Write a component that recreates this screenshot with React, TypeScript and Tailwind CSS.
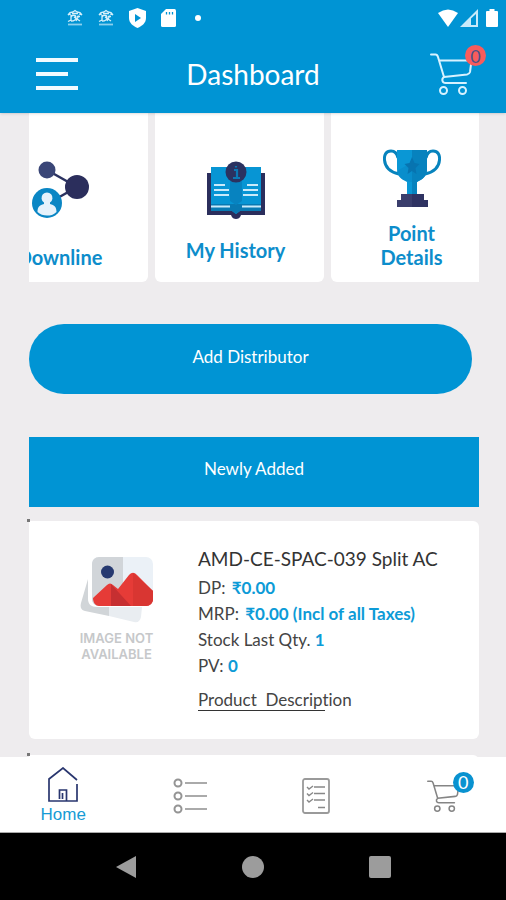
import type { ReactNode } from 'react';

function AlertIcon() {
  return (
    <svg width="16" height="18" viewBox="0 0 16 18" fill="none" stroke="#d5effa" strokeWidth="1.3">
      <path d="M1 6 3 3.500l3-.5 2-1.500L10 3l3 .5L15 6M1 6l3-1M15 6l-3-1M5 4.500h6" />
      <path d="M4 6v6M4 8.500c0-3 5-3 5 0 0 2-2 3.500-5 3.500M7 8l6 4M12 6.500l-3 5.500M10 7.500h3M1 12.500l3-1.500" />
      <path d="M1 15.500h14" strokeWidth="1.800" opacity=".65" />
    </svg>
  );
}

function CartIcon({ className }: { className: string }) {
  return (
    <svg className={className} viewBox="0 0 42 42" fill="none" stroke="currentColor" strokeLinecap="round" strokeLinejoin="round">
      <path d="M1 1.500h4.500c1.500 0 2 .8 2.500 2.500L14 24l23-2.500c2-.3 2.500-1 3-2.500l1.500-11.500H9" />
      <path d="M14 24c-1.500 1-2 2.500-1.500 4 .5 1.500 1.500 2 3 2h20.500" />
      <circle cx="13.500" cy="37.500" r="3.500" />
      <circle cx="32.500" cy="37.500" r="3.500" />
    </svg>
  );
}

function DownlineIcon() {
  return (
    <svg width="58" height="58" viewBox="0 0 58 58">
      <path d="m16 9 30 17-30 17" fill="none" stroke="#2b3260" strokeWidth="2.500" />
      <circle cx="16" cy="9" r="8.500" fill="#3a4677" />
      <circle cx="46" cy="26" r="12" fill="#2b2e5c" />
      <circle cx="16" cy="42" r="15" fill="#0a86c4" />
      <path d="M6.500 51c0-5 2-7 6.500-8v-1.500a5.500 5.500 0 1 1 6 0V43c4.500 1 6.500 3 6.500 8-3 3-6 3.500-9.500 3.500S9 53.500 6.500 51Z" fill="#e6f2fb" />
    </svg>
  );
}

function HistoryIcon() {
  return (
    <svg width="58" height="58" viewBox="0 0 58 58">
      <path d="M0 12h58v42H34c-1 3-3 4-5 4s-4-1-5-4H0Z" fill="#2b2e5c" />
      <path d="M4 6h50v44H33l-4 3-4-3H4Z" fill="#0795d4" />
      <path d="M4 43h50v7H33l-4 3-4-3H4Z" fill="#0879b2" />
      <path d="M23 20h12v20l-6 4-6-4Z" fill="#0783c0" />
      <path d="M7 24h11M7 29h15M7 34h15M4 45.500h19M40 24h11M36 29h15M36 34h15M35 45.500h19" stroke="#c9eafa" strokeWidth="2" />
      <circle cx="29" cy="11" r="10.500" fill="#2b3260" />
      <path d="M27 9h3v8M26 17h7M29 5v1.500" fill="none" stroke="#0b79b5" strokeWidth="2.200" />
    </svg>
  );
}

function TrophyIcon() {
  return (
    <svg width="58" height="58" viewBox="0 0 58 58">
      <path d="M15 9C14 4 12 2 8 2 3 2 1 6 1.500 11 2 18 7 23 16 25M43 9c1-5 3-7 7-7 5 0 7 4 6.500 9C56 18 51 23 42 25" fill="none" stroke="#0783bd" strokeWidth="3" />
      <path d="M14 1h30v19c0 7-4 10-10 13v13H24V33c-6-3-10-6-10-13Z" fill="#0a97d5" />
      <path d="M29 1h15v19c0 7-4 10-10 13v13h-5Z" fill="#0782be" />
      <path d="m14 22 12-7 3-3v21c-9-1-14-4-15-11Z" fill="#0782be" opacity=".4" />
      <path d="m29 8 2.500 6 5 1-4 4 1 6-4.500-3-4.500 3 1-6-4-4 5-1Z" fill="#0774b0" />
      <path d="M18 45h23v6h4v7H14v-7h4Z" fill="#3a3e6c" />
      <path d="M29 45h12v6h4v7H29Z" fill="#2f3362" />
    </svg>
  );
}

function MissingImage() {
  return (
    <svg width="74" height="68" viewBox="0 0 74 68">
      <path d="M8 23 1 47c-1 4 0 7 4 8l24 5V51H17c-6 0-9-3-9-8Z" fill="#d1d5d8" />
      <path d="M29 51v9l25 6c4 1 6-1 7-5l1-10Z" fill="#e9edf1" />
      <rect x="12" y="1" width="61" height="49" rx="7" fill="#ebf1f7" />
      <path d="M19 1h24v49H19c-4 0-7-3-7-7V8c0-4 3-7 7-7Z" fill="#d1d5d9" />
      <circle cx="27.500" cy="16" r="6.500" fill="#263970" />
      <path d="m13 42 14-13c2-2 4-2 6 0l5 4 11-14c3-3 5-3 8 0l16 16v8c0 4-3 7-7 7H19c-3 0-6-3-6-8Z" fill="#e63b37" />
      <path d="m31 28 20 22H31Z" fill="#c62f31" />
      <path d="m53 17 20 18v8c0 4-3 7-7 7H53Z" fill="#d93632" />
    </svg>
  );
}

function Tile({ icon, children }: { icon: ReactNode; children: ReactNode }) {
  return (
    <a href="#" className="flex h-[169px] w-[169px] shrink-0 flex-col items-center rounded-b-md bg-white pr-2 text-center text-[20px] leading-6 font-bold text-[#0d8dcb]">
      {icon}
      {children}
    </a>
  );
}

function Marker() {
  return <span className="absolute -top-0.5 -left-0.5 size-[3px] bg-[#777]" />;
}

export default function App() {
  return (
    <div className="flex h-screen flex-col overflow-hidden bg-[#eeecee] font-['Lato','Noto_Sans',sans-serif] [font-variant-ligatures:none]">
      <header className="z-10 shrink-0 bg-[#0094d4] text-white shadow-sm">
        <div className="flex h-[35px] items-center justify-between pr-2 pl-[67px]">
          <div className="flex items-center gap-[15px]">
            <AlertIcon />
            <AlertIcon />
            <svg width="17" height="20" viewBox="0 0 17 20">
              <path d="M8.500 0 17 3v7c0 5-4 8-8.500 10C4 18 0 15 0 10V3Z" fill="#fff" />
              <path d="m6 6 6 4-6 4Z" fill="#0094d4" />
            </svg>
            <svg width="15" height="18" viewBox="0 0 15 18">
              <path d="M5 0h8.500Q15 0 15 2v14.500q0 1.500-1.500 1.500h-12Q0 18 0 16.500V5Z" fill="#fff" />
              <path d="M5.500 3v2.500M8.500 3v2.500M11.500 3v2.500" stroke="#0094d4" strokeWidth="1.300" />
            </svg>
            <span className="ml-1 size-1.5 rounded-full bg-white" />
          </div>
          <div className="flex items-center">
            <svg width="20" height="18" viewBox="0 0 20 18"><path d="M0 4Q10-3 20 4L10 18Z" fill="#fff" /></svg>
            <svg className="ml-0.5" width="18" height="18" viewBox="0 0 18 18">
              <path d="M18 0v18H0Z" fill="#c8eafa" />
              <path d="M11 9.500 16 5v11h-5Z" fill="#0094d4" />
            </svg>
            <svg className="ml-2" width="12" height="18" viewBox="0 0 12 18">
              <path d="M3.500 0h5v2H11q1 0 1 1v14q0 1-1 1H1q-1 0-1-1V3q0-1 1-1h2.500Z" fill="#fff" />
            </svg>
          </div>
        </div>
        <div className="grid h-[78px] grid-cols-[80px_1fr_80px] items-center">
          <button aria-label="Menu" className="flex flex-col gap-2.5 pl-9">
            <span className="h-1 w-[42px] bg-[#f1faff]" />
            <span className="h-1 w-8 bg-[#f1faff]" />
            <span className="h-1 w-[42px] bg-[#f1faff]" />
          </button>
          <h1 className="text-center text-[28px] leading-8">Dashboard</h1>
          <button aria-label="Cart" className="relative h-[42px]">
            <CartIcon className="ml-1 size-[42px] stroke-2 text-[#d7f2ff]" />
            <span className="absolute -top-2 right-5 flex size-[21px] items-center justify-center rounded-full bg-[#f85c5c] text-[18px] leading-5 text-[#4b5287]">0</span>
          </button>
        </div>
      </header>

      <main className="min-h-0 flex-1 overflow-hidden pr-[27px] pl-[29px]">
        <nav className="overflow-hidden">
          <div className="-ml-[50px] flex gap-[7px]">
            <Tile icon={<div className="mt-12 mb-[26px]"><DownlineIcon /></div>}>Downline</Tile>
            <Tile icon={<div className="mt-12 mb-[19px]"><HistoryIcon /></div>}>My History</Tile>
            <Tile icon={<div className="mt-9 mb-3.5"><TrophyIcon /></div>}>
              <span>Point<br />Details</span>
            </Tile>
          </div>
        </nav>

        <div className="pt-[42px] pr-[7px]">
          <button className="h-[70px] w-full rounded-full bg-[#0094d4] pb-1 text-[17px] text-white">Add Distributor</button>
        </div>

        <h2 className="mt-[43px] flex h-[70px] items-center justify-center bg-[#0094d4] pb-1.5 text-[17px] text-white">Newly Added</h2>

        <article className="relative mt-3.5 flex h-[218px] rounded-md rounded-tl-none bg-white text-[17px] leading-[26px] text-[#444]">
          <Marker />
          <div className="flex w-[169px] shrink-0 flex-col items-center pt-[35px] pl-1.5">
            <MissingImage />
            <p className="mt-1.5 text-center font-['Inter',sans-serif] text-[13px] leading-4 font-semibold text-[#c6c8ca]">
              IMAGE NOT<br />AVAILABLE
            </p>
          </div>
          <div className="min-w-0 pt-6">
            <h3 className="mb-0.5 text-[19px] leading-7 whitespace-nowrap text-[#333]">AMD-CE-SPAC-039 Split AC</h3>
            <p>DP: <b className="ml-0.5 text-[#0d9bd7]">₹0.00</b></p>
            <p>MRP: <b className="ml-0.5 text-[#0d9bd7]">₹0.00 (Incl of all Taxes)</b></p>
            <p>Stock Last Qty. <b className="text-[#0d9bd7]">1</b></p>
            <p>PV: <b className="text-[#0d9bd7]">0</b></p>
            <a href="#" className="relative mt-2 block whitespace-pre">
              Product  Description
              <span className="absolute bottom-0.5 left-0 h-px w-[127px] bg-[#333]" />
            </a>
          </div>
        </article>

        <article className="relative mt-4 h-[218px] rounded-md rounded-tl-none bg-white">
          <Marker />
        </article>
      </main>

      <nav className="grid h-[76px] shrink-0 grid-cols-4 items-center justify-items-center border-b border-[#aaa] bg-white pt-0.5">
        <a href="#" className="flex flex-col items-center gap-0.5 font-['Liberation_Sans',sans-serif] text-[17px] leading-5 text-[#169bd5]">
          <svg width="30" height="36" viewBox="0 0 30 36" fill="none" stroke="#29366f" strokeWidth="1.700">
            <path d="M29 13 15 1 1 12v22h28V17M11.500 32V23h7v11M14.500 32v-6" />
          </svg>
          Home
        </a>
        <a href="#" aria-label="Categories">
          <svg width="34" height="36" viewBox="0 0 34 36" fill="none" stroke="#949494" strokeWidth="2">
            <circle cx="5" cy="5" r="3.500" />
            <circle cx="5" cy="18" r="3.500" />
            <circle cx="5" cy="31" r="3.500" />
            <path d="M12 5h22M12 18h22M12 31h22" stroke="#aaa" />
          </svg>
        </a>
        <a href="#" aria-label="Orders">
          <svg width="28" height="36" viewBox="0 0 28 36" fill="none" stroke="#888" strokeWidth="1.400">
            <rect x="1" y="1" width="26" height="34" rx="2" strokeWidth="1.800" stroke="#9a9a9a" />
            <path d="m5 9 2 2 4-3M5 15.500l2 2 4-3M5 22l2 2 4-3M12 9h11M12 15.500h11M12 22h11M16 29.500h7" />
          </svg>
        </a>
        <a href="#" aria-label="Cart" className="relative">
          <CartIcon className="h-8 w-[34px] stroke-2 text-[#858585]" />
          <span className="absolute -top-2 -right-3.5 flex size-[21px] items-center justify-center rounded-full bg-[#0992d0] text-[18px] leading-5 text-white">0</span>
        </a>
      </nav>

      <div className="flex h-[67px] shrink-0 items-center justify-center gap-[105px] bg-black">
        <button aria-label="Back">
          <svg width="22" height="24" viewBox="0 0 22 24"><path d="M21 1v22L1 12Z" fill="#9c9c9c" /></svg>
        </button>
        <button aria-label="Home screen" className="size-[22px] rounded-full bg-[#9c9c9c]" />
        <button aria-label="Recent apps" className="size-[22px] rounded-xs bg-[#9c9c9c]" />
      </div>
    </div>
  );
}
